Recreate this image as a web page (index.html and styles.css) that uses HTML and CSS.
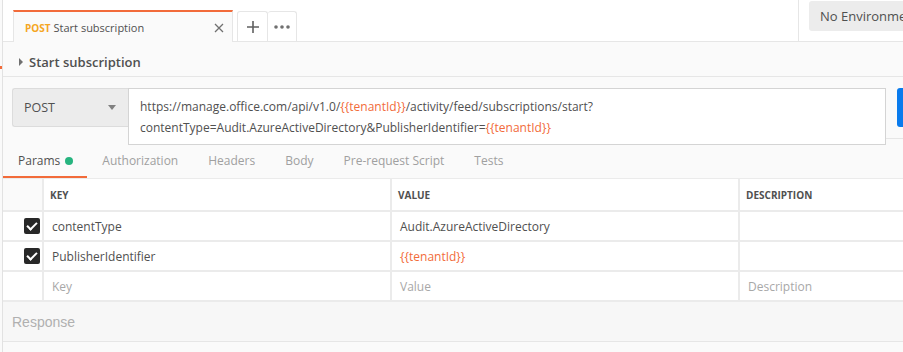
FILE: index.html
```html
<!DOCTYPE html>
<html lang="en">

<head>
    <meta charset="UTF-8">
    <meta name="viewport" content="width=device-width, initial-scale=1.0">
    <title>Start subscription</title>
    <link rel="stylesheet" href="styles.css">
</head>

<body>
    <div class="app">
        <div class="rail"><span class="rail-mark"></span></div>
        <div class="main">
            <div class="tabbar">
                <div class="tab">
                    <span class="tab-method">POST</span>
                    <span class="tab-name">Start subscription</span>
                    <svg class="tab-close" width="10" height="10" viewBox="0 0 10 10">
                        <path d="M1 1 L9 9 M9 1 L1 9" stroke="#707070" stroke-width="1.3" fill="none" />
                    </svg>
                </div>
                <div class="tab-btn tab-add">
                    <svg width="12" height="12" viewBox="0 0 12 12">
                        <path d="M6 0 V12 M0 6 H12" stroke="#606060" stroke-width="1.6" fill="none" />
                    </svg>
                </div>
                <div class="tab-btn">
                    <svg width="16" height="4" viewBox="0 0 16 4">
                        <circle cx="2" cy="2" r="1.8" fill="#707070" />
                        <circle cx="8" cy="2" r="1.8" fill="#707070" />
                        <circle cx="14" cy="2" r="1.8" fill="#707070" />
                    </svg>
                </div>
                <div class="tab-spacer"></div>
                <div class="env-wrap">
                    <div class="env-select">No Environment</div>
                </div>
            </div>

            <div class="titlebar">
                <span class="caret"></span>
                <span>Start subscription</span>
            </div>

            <div class="request">
                <div class="method">
                    <span>POST</span>
                    <span class="method-arrow"></span>
                </div>
                <div class="url">
                    https://manage.office.com/api/v1.0/<span class="var">{{tenantId}}</span>/activity/feed/subscriptions/start?<br>
                    contentType=Audit.AzureActiveDirectory&amp;PublisherIdentifier=<span class="var">{{tenantId}}</span>
                </div>
                <div class="send-col">
                    <div class="send"></div>
                </div>
            </div>

            <div class="req-tabs">
                <div class="req-tab active">Params <span class="dot"></span></div>
                <div class="req-tab">Authorization</div>
                <div class="req-tab">Headers</div>
                <div class="req-tab">Body</div>
                <div class="req-tab">Pre-request Script</div>
                <div class="req-tab">Tests</div>
            </div>

            <div class="params">
                <div class="cell check head"></div>
                <div class="cell head">KEY</div>
                <div class="cell head">VALUE</div>
                <div class="cell head">DESCRIPTION</div>

                <div class="cell check"><span class="box"></span></div>
                <div class="cell">contentType</div>
                <div class="cell">Audit.AzureActiveDirectory</div>
                <div class="cell"></div>

                <div class="cell check"><span class="box"></span></div>
                <div class="cell">PublisherIdentifier</div>
                <div class="cell var">{{tenantId}}</div>
                <div class="cell"></div>

                <div class="cell check"></div>
                <div class="cell placeholder">Key</div>
                <div class="cell placeholder">Value</div>
                <div class="cell placeholder">Description</div>
            </div>

            <div class="response">Response</div>
        </div>
    </div>
</body>

</html>
```

FILE: styles.css
```css
body {
    margin: 0;
    font-family: "Open Sans", sans-serif;
    font-size: 13px;
    color: #505050;
    background-color: #ffffff;
    overflow: hidden;
}

.app {
    display: flex;
    height: 352px;
}

.rail {
    width: 2px;
    border-right: 1px solid #e2e2e2;
    background-color: #fafafa;
    position: relative;
}

.rail-mark {
    position: absolute;
    left: 0;
    top: 66px;
    width: 2px;
    height: 3px;
    background-color: #f26b3a;
}

.main {
    flex: 1;
    display: flex;
    flex-direction: column;
    background-color: #fafafa;
}

/* top tab strip */
.tabbar {
    display: flex;
    align-items: flex-end;
    height: 41px;
    background-color: #ffffff;
    border-bottom: 1px solid #e6e6e6;
    padding-left: 10px;
}

.tab {
    display: flex;
    align-items: center;
    height: 29px;
    margin-bottom: -1px;
    padding: 1px 0 0 11px;
    width: 207px;
    border-top: 2px solid #f26b3a;
    border-left: 1px solid #e6e6e6;
    border-right: 1px solid #e6e6e6;
    background-color: #fafafa;
}

.tab-method {
    color: #f5a623;
    font-size: 10px;
    font-weight: 700;
    margin-right: 3px;
}

.tab-name {
    flex: 1;
    font-size: 11px;
    color: #505050;
}

.tab-close {
    margin-right: 8px;
}

.tab-btn {
    display: flex;
    align-items: center;
    justify-content: center;
    width: 29px;
    height: 29px;
    border: 1px solid #e6e6e6;
    border-bottom: none;
    border-radius: 3px 3px 0 0;
    background-color: #ffffff;
}

.tab-add {
    margin-left: 4px;
}

.tab-btn + .tab-btn {
    border-left: none;
    width: 28px;
}

.tab-spacer {
    flex: 1;
}

.env-wrap {
    align-self: stretch;
    border-left: 1px solid #e6e6e6;
    padding: 1px 0 0 10px;
    width: 94px;
    overflow: hidden;
}

.env-select {
    height: 30px;
    line-height: 30px;
    padding-left: 11px;
    background-color: #ececec;
    border-radius: 3px 0 0 3px;
    white-space: nowrap;
    font-size: 13px;
    color: #505050;
}

/* request title */
.titlebar {
    display: flex;
    align-items: center;
    height: 35px;
    padding: 5px 0 0 16px;
    box-sizing: border-box;
    border-bottom: 1px solid #e6e6e6;
    font-size: 13px;
    font-weight: 600;
    color: #505050;
}

.caret {
    width: 0;
    height: 0;
    border-top: 4px solid transparent;
    border-bottom: 4px solid transparent;
    border-left: 4px solid #707070;
    margin-right: 6px;
}

/* url row */
.request {
    display: flex;
    align-items: flex-start;
    margin-top: 11px;
    padding-left: 9px;
}

.method {
    display: flex;
    align-items: center;
    justify-content: space-between;
    height: 39px;
    padding: 0 12px 0 11px;
    box-sizing: border-box;
    width: 116px;
    background-color: #ececec;
    border: 1px solid #dcdcdc;
    border-right: none;
    border-radius: 3px 0 0 3px;
    font-size: 12.5px;
    color: #505050;
}

.method-arrow {
    width: 0;
    height: 0;
    border-left: 4px solid transparent;
    border-right: 4px solid transparent;
    border-top: 5px solid #808080;
}

.url {
    width: 758px;
    height: 57px;
    box-sizing: border-box;
    padding: 7px 11px;
    line-height: 21px;
    background-color: #ffffff;
    border: 1px solid #d4d4d4;
    color: #505050;
    font-size: 12px;
    white-space: nowrap;
}

.var {
    color: #f26b3a;
}

.send-col {
    flex: 1;
    height: 50px;
    border-bottom: 1px solid #e6e6e6;
    padding-left: 11px;
}

.send {
    height: 39px;
    background-color: #097bed;
    border-radius: 3px 0 0 3px;
}

/* params / auth tabs */
.req-tabs {
    display: flex;
    height: 33px;
}

.req-tab {
    display: flex;
    align-items: center;
    padding: 0 15px;
    color: #a0a0a0;
    font-size: 12px;
    border-bottom: 2px solid transparent;
}

.req-tab.active {
    color: #505050;
    border-bottom-color: #f26b3a;
    padding-right: 14px;
}

.dot {
    width: 8px;
    height: 8px;
    border-radius: 50%;
    background-color: #26b47f;
    margin-left: 5px;
}

/* key / value table */
.params {
    display: grid;
    grid-template-columns: 39px 346px 346px 1fr;
    grid-auto-rows: 28px;
    grid-template-rows: 31px;
    gap: 2px;
    background-color: #ebebeb;
    border-top: 1px solid #ebebeb;
    border-bottom: 2px solid #ebebeb;
}

.cell {
    display: flex;
    align-items: center;
    padding-left: 8px;
    background-color: #ffffff;
    color: #505050;
    font-size: 12px;
    white-space: nowrap;
    overflow: hidden;
}

.cell.head {
    font-size: 10px;
    font-weight: 700;
    color: #505050;
    padding-left: 6px;
}

.cell.check {
    justify-content: flex-end;
    padding: 0 2px 0 0;
}

.cell.check.head {
    background-color: #fafafa;
}

.cell.var {
    color: #f26b3a;
}

.cell.placeholder {
    color: #a8a8a8;
}

.box {
    position: relative;
    width: 16px;
    height: 16px;
    border-radius: 2px;
    background-color: #282828;
}

.box::after {
    content: "";
    position: absolute;
    left: 5px;
    top: 2px;
    width: 4px;
    height: 8px;
    border-right: 2px solid #ffffff;
    border-bottom: 2px solid #ffffff;
    transform: rotate(45deg);
}

.response {
    height: 39px;
    line-height: 40px;
    padding-left: 9px;
    background-color: #f7f7f7;
    border-bottom: 1px solid #e6e6e6;
    font-family: "Liberation Sans", Arial, sans-serif;
    font-size: 14px;
    color: #b0b0b0;
}
```
